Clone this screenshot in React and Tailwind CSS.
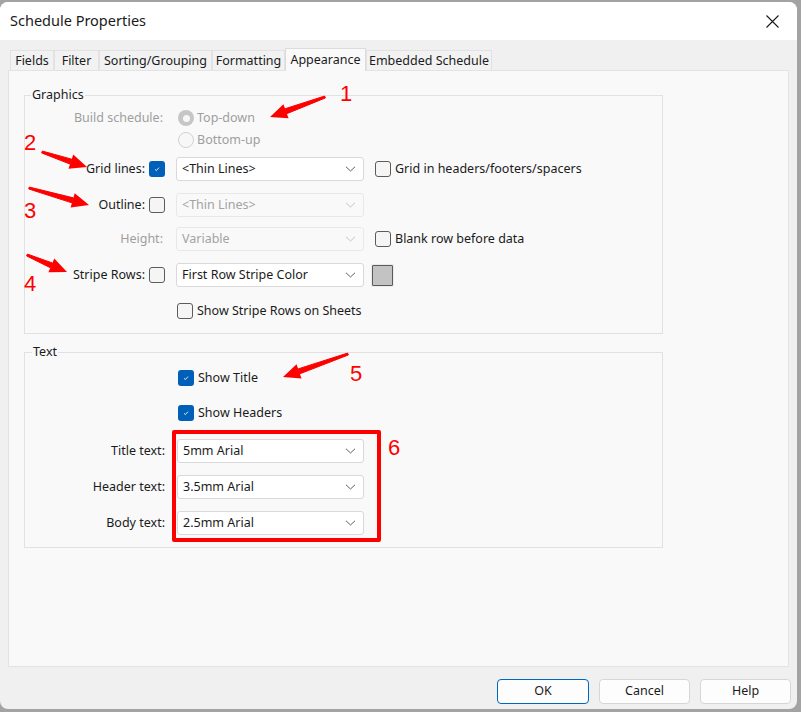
import React from 'react';

const tabs = [
    { name: 'Fields', w: 'w-[44px]' },
    { name: 'Filter', w: 'w-[45px]' },
    { name: 'Sorting/Grouping', w: 'w-[113px]' },
    { name: 'Formatting', w: 'w-[73px]' },
    { name: 'Appearance', w: 'w-[81px]', active: true },
    { name: 'Embedded Schedule', w: 'w-[126px]' },
];

// red annotation arrows: tail -> tip
const arrows = [
    [325, 97, 270, 117],
    [42, 152, 87, 167],
    [29, 188, 89, 205],
    [27, 255, 67, 272],
    [348, 354, 283, 377],
];

const numbers = [
    ['1', 346, 101],
    ['2', 30, 150],
    ['3', 30, 218],
    ['4', 30, 291],
    ['5', 356, 381],
    ['6', 394, 455],
];

function Arrow({ x1, y1, x2, y2 }) {
    const dx = x2 - x1;
    const dy = y2 - y1;
    const len = Math.hypot(dx, dy);
    const ux = dx / len;
    const uy = dy / len;
    const nx = -uy;
    const ny = ux;
    const headLen = 17;
    const headHalf = 7.5;
    const bx = x2 - ux * headLen;
    const by = y2 - uy * headLen;
    const shaft = [
        [x1 + nx * 1, y1 + ny * 1],
        [bx + nx * 2.6, by + ny * 2.6],
        [bx - nx * 2.6, by - ny * 2.6],
        [x1 - nx * 1, y1 - ny * 1],
    ];
    const head = [
        [x2, y2],
        [bx + nx * headHalf, by + ny * headHalf],
        [bx - nx * headHalf, by - ny * headHalf],
    ];
    const pts = (a) => a.map((p) => p.join(',')).join(' ');
    return (
        <g fill="#ff0000">
            <polygon points={pts(shaft)} strokeLinejoin="round" stroke="#ff0000" strokeWidth="1" />
            <polygon points={pts(head)} />
        </g>
    );
}

function Check({ checked }) {
    if (checked) {
        return (
            <span className="w-4 h-4 shrink-0 rounded-[3px] bg-[#005fb8] flex items-center justify-center">
                <svg width="10" height="10" viewBox="0 0 10 10">
                    <path d="M3 5.3 L4.4 6.6 L7 3.6" fill="none" stroke="#dfe9f5" strokeWidth="1" />
                </svg>
            </span>
        );
    }
    return <span className="block w-4 h-4 shrink-0 rounded-[3px] border border-[#5c5c5c] bg-[#f5f5f5]" />;
}

function Select({ value, disabled, w = 'w-[188px]' }) {
    return (
        <div
            className={
                'h-[24px] ' +
                w +
                ' shrink-0 rounded-[3px] border flex items-center justify-between pl-[5px] pr-[7px] ' +
                (disabled ? 'bg-[#f9f9f9] border-[#e8e8e8] text-[#a3a3a3]' : 'bg-white border-[#d9d9d9] text-[#1b1b1b]')
            }
        >
            <span className="text-[12.5px]">{value}</span>
            <svg width="11" height="6" viewBox="0 0 11 6">
                <path d="M1 0.8 L5.5 5 L10 0.8" fill="none" stroke={disabled ? '#c4c4c4' : '#5f5f5f'} strokeWidth="1" />
            </svg>
        </div>
    );
}

function Label({ children, check, disabled }) {
    return (
        <div className="w-[140px] shrink-0 flex items-center justify-end">
            <span className={'text-[12.5px] ' + (disabled ? 'text-[#9e9e9e] pr-[2px]' : 'text-[#1b1b1b]')}>{children}</span>
            {check !== undefined && (
                <span className="block ml-[4px]">
                    <Check checked={check} />
                </span>
            )}
        </div>
    );
}

function CheckLabel({ checked, children }) {
    return (
        <div className="flex items-center gap-[4px]">
            <Check checked={checked} />
            <span className="text-[12.5px] text-[#1b1b1b]">{children}</span>
        </div>
    );
}

export default function App() {
    return (
        <div className="relative w-[801px] h-[712px] bg-[#a3a3a3] pt-[2px] font-['Noto_Sans',sans-serif] overflow-hidden">
            <div className="w-[797px] h-[707px] bg-[#f0f0f0] rounded-lg overflow-hidden flex flex-col">
                {/* title bar */}
                <div className="h-[38px] bg-white flex items-center justify-between pl-[10px] pr-[18px]">
                    <span className="text-[14.5px] text-[#1a1a1a]">Schedule Properties</span>
                    <svg width="13" height="13" viewBox="0 0 13 13">
                        <path d="M0.5 0.5 L12.5 12.5 M12.5 0.5 L0.5 12.5" stroke="#1a1a1a" strokeWidth="1.1" />
                    </svg>
                </div>

                <div className="px-[8px] flex flex-col">
                    {/* tabs */}
                    <div className="mt-[8px] h-[22px] pl-[2px] flex items-end">
                        {tabs.map((t) =>
                            t.active ? (
                                <div
                                    key={t.name}
                                    className={t.w + ' h-[23px] -mb-px relative z-10 bg-[#f9f9f9] border border-b-0 border-[#dcdcdc] flex items-center justify-center whitespace-nowrap text-[12.5px] text-[#1b1b1b]'}
                                >
                                    {t.name}
                                </div>
                            ) : (
                                <div
                                    key={t.name}
                                    className={t.w + ' h-[20px] bg-[#f2f2f2] border border-b-0 border-[#e2e2e2] flex items-center justify-center whitespace-nowrap text-[12.5px] text-[#1b1b1b] pt-[2px]'}
                                >
                                    {t.name}
                                </div>
                            )
                        )}
                    </div>

                    {/* tab page */}
                    <div className="h-[597px] bg-[#f9f9f9] border border-[#e3e3e3] pl-[15px] pt-[16px]">
                        <fieldset className="w-[639px] border border-[#e1e1e1] pb-[11px]">
                            <legend className="ml-[6px] px-[1px] text-[12.5px] leading-[16px] text-[#1b1b1b]">Graphics</legend>

                            <div className="mt-[4px] h-[22px] flex items-center">
                                <Label disabled>Build schedule:</Label>
                                <div className="ml-[13px] flex items-center gap-[3px]">
                                    <span className="w-4 h-4 rounded-full bg-[#c6c6c6] flex items-center justify-center">
                                        <span className="w-[7px] h-[7px] rounded-full bg-[#f7f7f7]" />
                                    </span>
                                    <span className="text-[12.5px] text-[#9e9e9e]">Top-down</span>
                                </div>
                            </div>
                            <div className="h-[22px] flex items-center">
                                <div className="w-[140px]" />
                                <div className="ml-[13px] flex items-center gap-[3px]">
                                    <span className="block w-4 h-4 rounded-full border border-[#d2d2d2] bg-[#f7f7f7]" />
                                    <span className="text-[12.5px] text-[#9e9e9e]">Bottom-up</span>
                                </div>
                            </div>

                            <div className="mt-[6px] h-[24px] flex items-center">
                                <Label check={true}>Grid lines:</Label>
                                <div className="ml-[11px]">
                                    <Select value="<Thin Lines>" />
                                </div>
                                <div className="ml-[11px]">
                                    <CheckLabel checked={false}>Grid in headers/footers/spacers</CheckLabel>
                                </div>
                            </div>

                            <div className="mt-[12px] h-[24px] flex items-center">
                                <Label check={false}>Outline:</Label>
                                <div className="ml-[11px]">
                                    <Select value="<Thin Lines>" disabled />
                                </div>
                            </div>

                            <div className="mt-[10px] h-[24px] flex items-center">
                                <Label disabled>Height:</Label>
                                <div className="ml-[11px]">
                                    <Select value="Variable" disabled />
                                </div>
                                <div className="ml-[11px]">
                                    <CheckLabel checked={false}>Blank row before data</CheckLabel>
                                </div>
                            </div>

                            <div className="mt-[12px] h-[24px] flex items-center">
                                <Label check={false}>Stripe Rows:</Label>
                                <div className="ml-[11px]">
                                    <Select value="First Row Stripe Color" />
                                </div>
                                <div className="ml-[7px] w-[23px] h-[23px] bg-[#ececec] p-[1px]">
                                    <div className="w-full h-full bg-[#c3c3c3] border border-[#5a5a5a] rounded-[1px]" />
                                </div>
                            </div>

                            <div className="mt-[13px] h-[22px] flex items-center">
                                <div className="w-[140px]" />
                                <div className="ml-[12px]">
                                    <CheckLabel checked={false}>Show Stripe Rows on Sheets</CheckLabel>
                                </div>
                            </div>
                        </fieldset>

                        <fieldset className="mt-[10px] w-[639px] border border-[#e1e1e1] pb-[12px]">
                            <legend className="ml-[7px] px-[1px] text-[12.5px] leading-[16px] text-[#1b1b1b]">Text</legend>

                            <div className="mt-[7px] h-[22px] flex items-center">
                                <div className="w-[140px]" />
                                <div className="ml-[13px]">
                                    <CheckLabel checked={true}>Show Title</CheckLabel>
                                </div>
                            </div>
                            <div className="mt-[13px] h-[22px] flex items-center">
                                <div className="w-[140px]" />
                                <div className="ml-[13px]">
                                    <CheckLabel checked={true}>Show Headers</CheckLabel>
                                </div>
                            </div>

                            <div className="mt-[15px] h-[24px] flex items-center">
                                <Label>Title text:</Label>
                                <div className="ml-[12px]">
                                    <Select value="5mm Arial" w="w-[187px]" />
                                </div>
                            </div>
                            <div className="mt-[12px] h-[24px] flex items-center">
                                <Label>Header text:</Label>
                                <div className="ml-[12px]">
                                    <Select value="3.5mm Arial" w="w-[187px]" />
                                </div>
                            </div>
                            <div className="mt-[12px] h-[24px] flex items-center">
                                <Label>Body text:</Label>
                                <div className="ml-[12px]">
                                    <Select value="2.5mm Arial" w="w-[187px]" />
                                </div>
                            </div>
                        </fieldset>
                    </div>

                    {/* buttons */}
                    <div className="mt-[12px] flex justify-end gap-[10px] -mr-[2px]">
                        <button className="w-[92px] h-[25px] rounded-[4px] bg-[#fdfdfd] border border-[#0067c0] text-[12.5px] text-[#1b1b1b]">
                            OK
                        </button>
                        <button className="w-[91px] h-[25px] rounded-[4px] bg-[#fdfdfd] border border-[#d6d6d6] text-[12.5px] text-[#1b1b1b]">
                            Cancel
                        </button>
                        <button className="w-[91px] h-[25px] rounded-[4px] bg-[#fdfdfd] border border-[#d6d6d6] text-[12.5px] text-[#1b1b1b]">
                            Help
                        </button>
                    </div>
                </div>
            </div>

            {/* annotations */}
            <div className="absolute left-[172px] top-[430px] w-[209px] h-[112px] border-4 border-[#ff0000] rounded-[2px] pointer-events-none" />
            <svg className="absolute left-0 top-0 pointer-events-none" width="801" height="712">
                {arrows.map(([a, b, c, d], i) => (
                    <Arrow key={i} x1={a} y1={b} x2={c} y2={d} />
                ))}
                {numbers.map(([n, x, y]) => (
                    <text key={n} x={x} y={y} fill="#ff0000" fontSize="22" textAnchor="middle" fontFamily="Liberation Sans, sans-serif">
                        {n}
                    </text>
                ))}
            </svg>
        </div>
    );
}
